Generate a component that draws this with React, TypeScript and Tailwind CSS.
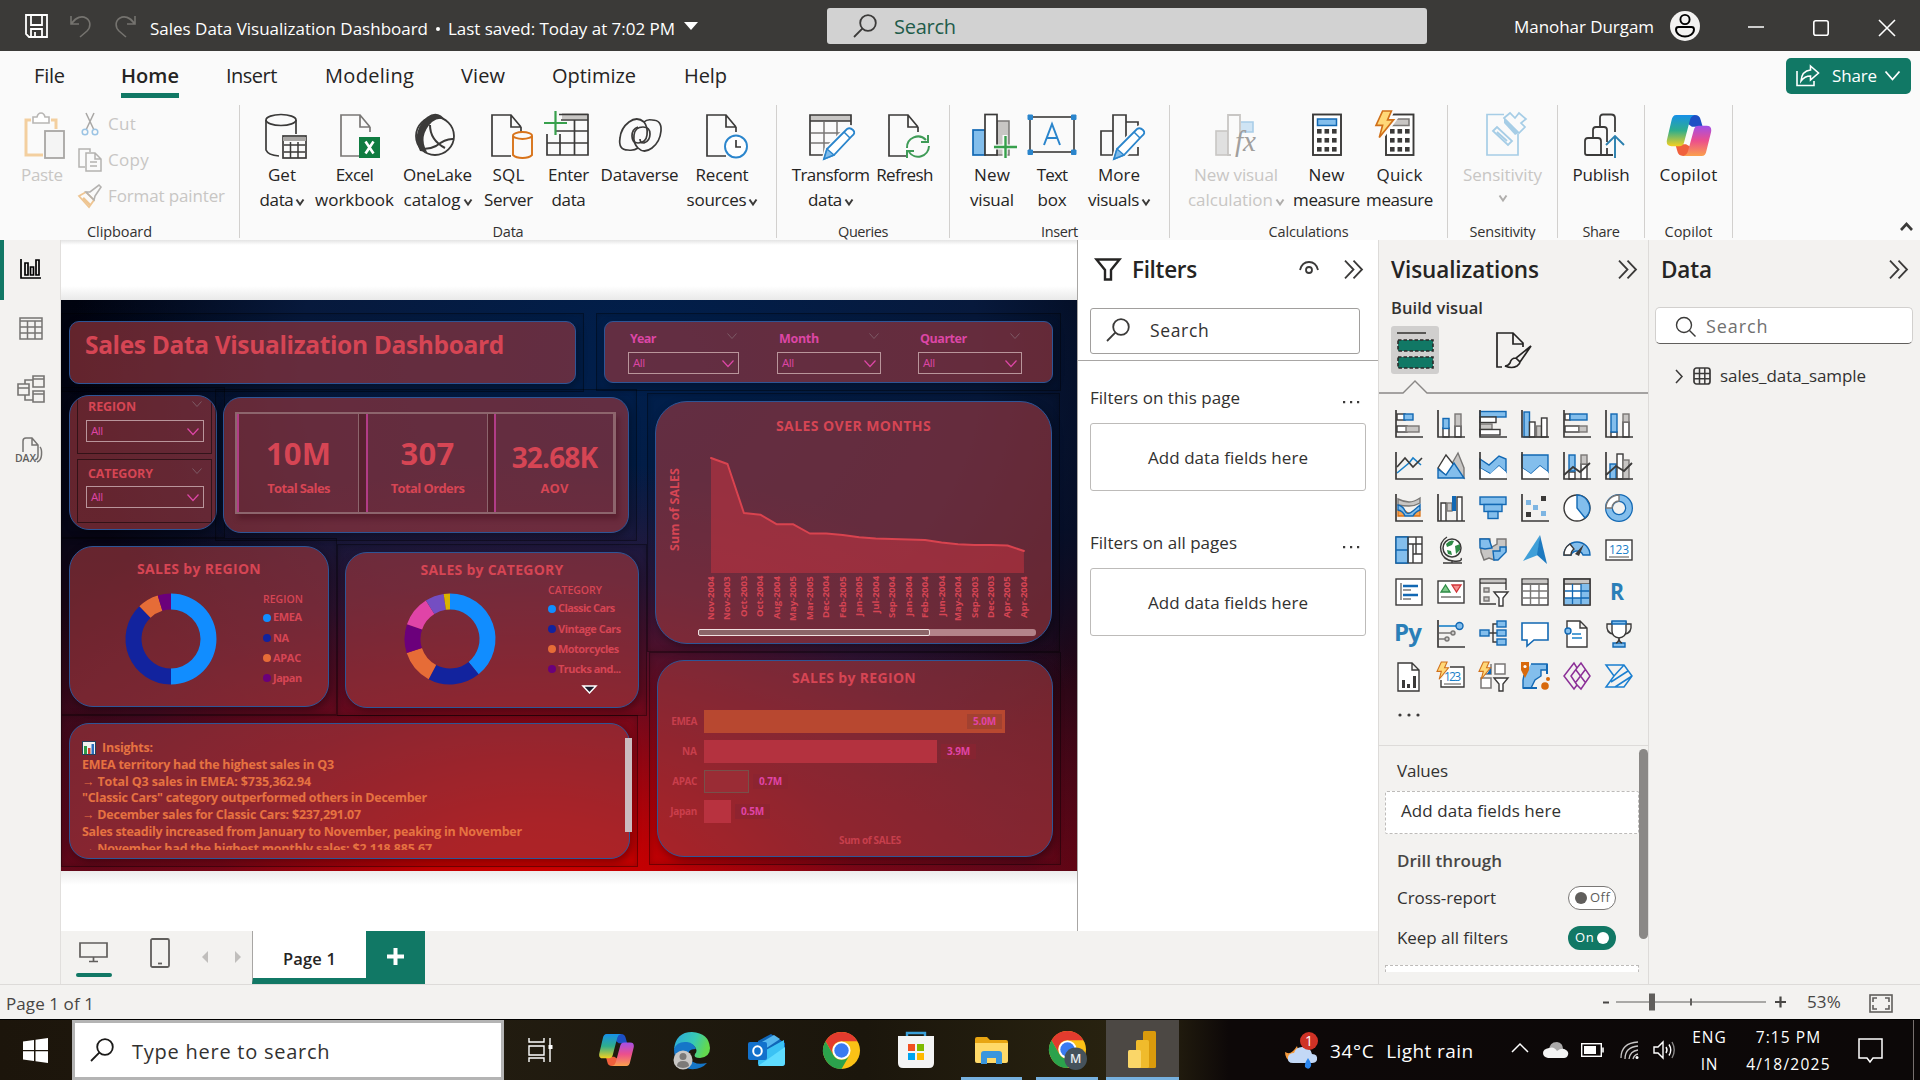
import React, { useLayoutEffect, useRef, type ReactNode } from "react";

const K = "#3b3a39";
const B = "#83beec";
const BS = "#1268b3";
const G = "#c8c6c4";
const GS = "#797775";

/* Text whose tracking is adjusted so that it fills the given width. */
function T({ w, c = "", children }: { w: number; c?: string; children: string }) {
  const ref = useRef<HTMLSpanElement>(null);
  useLayoutEffect(() => {
    const el = ref.current;
    if (!el) return;
    el.style.letterSpacing = "0px";
    const natural = el.getBoundingClientRect().width;
    el.style.letterSpacing = `${(w - natural) / Math.max(1, children.length - 0.5)}px`;
  }, [w, children]);
  return (
    <span ref={ref} className={`inline-block shrink-0 whitespace-nowrap ${c}`}>
      {children}
    </span>
  );
}

function Svg({ w, h, c = "", children }: { w: number; h: number; c?: string; children: ReactNode }) {
  return (
    <svg width={w} height={h} viewBox={`0 0 ${w} ${h}`} fill="none" className={`block shrink-0 overflow-visible ${c}`}>
      {children}
    </svg>
  );
}

const Chev = ({ w, h, s, sw = 1.5, c = "" }: { w: number; h: number; s: string; sw?: number; c?: string }) => (
  <Svg w={w} h={h} c={c}>
    <path d={`M0.5 0.5L${w / 2} ${h - 0.5}L${w - 0.5} 0.5`} stroke={s} strokeWidth={sw} />
  </Svg>
);

const Mag = ({ s, w = 24, c = "" }: { s: string; w?: number; c?: string }) => (
  <svg width={w} height={w} viewBox="0 0 24 24" fill="none" stroke={s} strokeWidth="1.8" className={`block shrink-0 ${c}`}>
    <circle cx="15" cy="9" r="7.8" />
    <path d="M9.3 14.7L1 23" />
  </svg>
);

const DoubleChev = () => (
  <Svg w={19} h={19} c="-mt-0.5">
    <path d="M1 0.7L9.5 9.5L1 18.3M9.5 0.7L18 9.5L9.5 18.3" stroke={K} strokeWidth="1.8" />
  </Svg>
);

/* ---------- title bar ---------- */
function TitleBar() {
  return (
    <header className="flex h-[51px] items-center bg-[#3b3a38] text-white">
      <Svg w={24} h={24} c="ml-[25px]">
        <path d="M1 1H22V23H4L1 20Z M6 1V11H17V1 M6 23V15H17V23 M10 18V23" stroke="#fff" strokeWidth="1.8" />
      </Svg>
      <Svg w={22} h={22} c="ml-[21px]">
        <path d="M1 1V9H9M1.5 8.5C6 2 12 .5 16 3C21 6 21 12 17 16L10 22" stroke="#75736f" strokeWidth="1.6" />
      </Svg>
      <Svg w={22} h={22} c="ml-[22px]">
        <path d="M21 1V9H13M20.500 8.500C16 2 10 .5 6 3C1 6 1 12 5 16L12 22" stroke="#75736f" strokeWidth="1.6" />
      </Svg>
      <div className="mt-[6px] ml-[14px] flex w-[526px] items-center text-[17px]">
        <T w={278}>Sales Data Visualization Dashboard</T>
        <span className="mx-[8px] h-1 w-1 rounded-full bg-white" />
        <T w={227}>Last saved: Today at 7:02 PM</T>
      </div>
      <Svg w={14} h={8} c="ml-[8px]"><path d="M0 0H14L7 8Z" fill="#fff" /></Svg>
      <div className="ml-[129px] flex h-9 w-[600px] items-center rounded-[3px] bg-[#d2d2d2] pl-[26px]">
        <Mag s={K} />
        <T w={62} c="mt-0.5 ml-[17px] text-[20px] text-[#1f5c4a]">Search</T>
      </div>
      <T w={140} c="mt-[2px] ml-[87px] text-[17px]">Manohar Durgam</T>
      <Svg w={30} h={30} c="ml-[16px]">
        <circle cx="15" cy="15" r="15" fill="#f3f2f1" />
        <circle cx="15" cy="8.500" r="4.600" stroke="#000" strokeWidth="1.9" />
        <path d="M8.500 16H21.500Q24 16 24 18.500C24 23 19 25.500 15 25.500S6 23 6 18.500Q6 16 8.500 16Z" stroke="#000" strokeWidth="1.9" />
      </Svg>
      <Svg w={16} h={16} c="mt-0.5 ml-[48px]"><path d="M0 8H16" stroke="#fff" strokeWidth="1.5" /></Svg>
      <Svg w={16} h={16} c="mt-[5px] ml-[49px]"><rect x=".8" y=".8" width="14.400" height="14.400" rx="2" stroke="#fff" strokeWidth="1.6" /></Svg>
      <Svg w={16} h={16} c="mt-[5px] ml-[50px]"><path d="M0 0L16 16M16 0L0 16" stroke="#fff" strokeWidth="1.6" /></Svg>
    </header>
  );
}

/* ---------- ribbon ---------- */
function Tabs() {
  const t = "flex h-full items-center text-[20px]";
  return (
    <nav className="flex h-[50px] items-center text-[#252423]">
      <div className={`${t} ml-[34px] w-[87px]`}><T w={31}>File</T></div>
      <div className={`${t} relative w-[105px] font-semibold`}>
        <T w={58}>Home</T>
        <span className="absolute bottom-[3px] left-0 h-[5px] w-[58px] bg-[#117865]" />
      </div>
      <div className={`${t} w-[99px]`}><T w={51}>Insert</T></div>
      <div className={`${t} w-[136px]`}><T w={89}>Modeling</T></div>
      <div className={`${t} w-[91px]`}><T w={44}>View</T></div>
      <div className={`${t} w-[132px]`}><T w={84}>Optimize</T></div>
      <div className={`${t}`}><T w={43}>Help</T></div>
      <div className="-mt-px mr-[9px] ml-auto flex h-9 w-[125px] items-center rounded-[5px] bg-[#117865] pl-[10px] text-white">
        <Svg w={24} h={22}>
          <path d="M1 6V20.500H18V16" stroke="#fff" strokeWidth="1.6" />
          <path d="M14.500 1L22.500 8L14.500 15V11C10 11 7.500 12.500 5 16C5.500 9.500 9 5.500 14.500 5Z" stroke="#fff" strokeWidth="1.6" />
        </Svg>
        <T w={45} c="ml-[12px] text-[17px]">Share</T>
        <Chev w={15} h={9} s="#fff" sw={1.8} c="ml-[8px]" />
      </div>
    </nav>
  );
}

function Group({ c, label, lw, children }: { c: string; label: string; lw: number; children: ReactNode }) {
  return (
    <section className={`flex h-[133px] shrink-0 flex-col border-r border-[#d2d0ce] ${c}`}>
      <div className="flex h-[112px] shrink-0 pt-[6px]">{children}</div>
      <div className="mt-[4px] flex w-full shrink-0 justify-center text-[14.500px] leading-[21px] text-[#323130]"><T w={lw}>{label}</T></div>
    </section>
  );
}

function Btn({ c, a, aw, b, bw, chev, dim, children }: { c: string; a: string; aw: number; b?: string; bw?: number; chev?: boolean; dim?: boolean; children: ReactNode }) {
  return (
    <div className={`flex shrink-0 flex-col items-center text-[17px] leading-[25px] ${dim ? "text-[#c8c6c4]" : "text-[#252423]"} ${c}`}>
      <div className="flex h-[51px] w-12 shrink-0 pt-px">{children}</div>
      <T w={aw}>{a}</T>
      <span className="flex items-center justify-center gap-[3px]">
        {b ? <T w={bw ?? 0}>{b}</T> : null}
        {chev ? <Chev w={8} h={6} s={dim ? "#b0aeac" : K} sw={2} c={b ? "mt-1" : "mt-2"} /> : null}
      </span>
    </div>
  );
}

const Doc = ({ x = 6, s = K }: { x?: number; s?: string }) => (
  <path transform={`translate(${x} 2)`} d="M30 13V18M30 13L20 1H1V42H20M20 1V13H30" stroke={s} strokeWidth="1.7" />
);
const Pencil = ({ x, y }: { x: number; y: number }) => (
  <g transform={`translate(${x} ${y})`}>
    <path d="M0 33L3 22L23 2Q27 -1 30 2T29 9L10 29Z" fill="#fafafa" stroke="#fafafa" strokeWidth="5" />
    <path d="M0 32L3 22L23 2Q26 0 29 3T28 9L10 28Z" fill="#fff" stroke="#2a85cc" strokeWidth="1.8" />
    <path d="M0 32L3 22L10 28Z" fill="#83beec" stroke="#2a85cc" strokeWidth="1.400" />
    <path d="M20 5L26 11" stroke="#2a85cc" strokeWidth="1.500" />
  </g>
);

const CopilotMark = ({ w, h, id, c = "" }: { w: number; h: number; id: string; c?: string }) => (
  <svg width={w} height={h} viewBox="0 0 46 42" className={`block shrink-0 ${c}`}>
    <defs>
      <linearGradient id={`${id}a`} x1="0" y1="0" x2="0" y2="1"><stop offset="0" stopColor="#1690e8" /><stop offset=".5" stopColor="#2fae8c" /><stop offset="1" stopColor="#f5d020" /></linearGradient>
      <linearGradient id={`${id}b`} x1="0" y1="0" x2="0" y2="1"><stop offset="0" stopColor="#a24fe8" /><stop offset=".5" stopColor="#ec4f8c" /><stop offset="1" stopColor="#fba04c" /></linearGradient>
    </defs>
    <path d="M24 0H29Q34 0 35 5L37 12H26L19 7Z" fill="#1c4fc4" />
    <path d="M22 42H17Q12 42 11 37L9 30H20L27 34Z" fill="#f0603c" />
    <path d="M10 0H29Q25 1 24 5L18 28Q17 32 13 32H5Q-1 32 .5 25L5 6Q6 0 10 0Z" fill={`url(#${id}a)`} />
    <path d="M36 42H17Q21 41 22 37L28 15Q29 11 33 11H41Q47 11 45.500 18L41 36Q40 42 36 42Z" fill={`url(#${id}b)`} />
  </svg>
);

const Bolt = () => <path d="M6 0H14L10.500 8H16L3 24L6 13H0Z" fill="#ffd878" stroke="#d0701a" strokeWidth="1.500" />;

function Ribbon() {
  const dots = [0, 1, 2].flatMap((r) => [0, 1, 2].map((q) => [q, r]));
  return (
    <div className="flex h-[139px] items-start bg-[#fafafa] pt-[4px]">
      <Group c="w-[240px]" label="Clipboard" lw={65}>
        <div className="ml-[21px] flex w-[57px] flex-col items-start text-[17px] leading-[25px] text-[#c8c6c4]">
          <div className="flex h-[51px] pt-px">
            <Svg w={48} h={48}>
              <path d="M10 8H5V43H22M30 8H35V17" stroke="#f3cf9f" strokeWidth="3" />
              <path d="M12 11V5H16Q17 1 20 1T24 5H28V11Z" stroke="#b8b6b4" strokeWidth="1.600" fill="#fff" />
              <rect x="24" y="19" width="19" height="27" stroke="#a8a6a4" strokeWidth="1.800" fill="#f4f4f4" />
            </Svg>
          </div>
          <T w={42}>Paste</T>
        </div>
        <div className="-mt-px flex flex-col text-[17px] text-[#c8c6c4]">
          <div className="flex h-[28px] items-center">
            <Svg w={24} h={24} c="mr-[6px]">
              <path d="M8 1L16 18M16 1L8 18" stroke="#a8a6a4" strokeWidth="1.500" />
              <circle cx="7" cy="20" r="2.800" stroke="#9cc4e4" strokeWidth="1.500" /><circle cx="17" cy="20" r="2.800" stroke="#9cc4e4" strokeWidth="1.500" />
            </Svg>
            <T w={28}>Cut</T>
          </div>
          <div className="mt-[8px] flex h-[28px] items-center">
            <Svg w={24} h={24} c="mr-[6px]">
              <path d="M7 19H1V1H12V4M8 5H17L23 11V23H8ZM17 5V11H23M12 14H19M12 18H19" stroke="#b4b2b0" strokeWidth="1.500" />
            </Svg>
            <T w={41}>Copy</T>
          </div>
          <div className="mt-[8px] flex h-[28px] items-center">
            <Svg w={24} h={24} c="mr-[6px]">
              <path d="M1 12L8 8L16 16L11 23Z" stroke="#eec592" strokeWidth="1.800" /><path d="M8 8L12 8L21 1L23 3L17 12L16 16Z" stroke="#b4b2b0" strokeWidth="1.600" /><path d="M5 14L12 21" stroke="#eec592" strokeWidth="2.500" />
            </Svg>
            <T w={117}>Format painter</T>
          </div>
        </div>
      </Group>
      <Group c="w-[537px]" label="Data" lw={31}>
        <Btn c="ml-[15px] w-[54px]" a="Get" aw={28} b="data" bw={34} chev>
          <Svg w={48} h={48}>
            <path d="M8 8V38Q10 43 21 44M38 8V22" stroke={K} strokeWidth="1.700" /><ellipse cx="23" cy="8" rx="15" ry="5.500" stroke={K} strokeWidth="1.700" />
            <rect x="25" y="24" width="23" height="22" fill="#fafafa" stroke={K} strokeWidth="1.700" /><path d="M25 27H48" stroke="#a8a6a4" strokeWidth="4" /><path d="M26 33H47M26 40H47M32.500 30V46M40 30V46" stroke={K} strokeWidth="1.500" />
          </Svg>
        </Btn>
        <Btn c="w-[91px]" a="Excel" aw={38} b="workbook" bw={79}>
          <Svg w={48} h={48}><Doc x={9} s={GS} /><rect x="28" y="25" width="21" height="21" fill="#107c41" /><path d="M34.500 29.500L42.500 41.500M42.500 29.500L34.500 41.500" stroke="#fff" strokeWidth="2.600" /></Svg>
        </Btn>
        <Btn c="w-[75px]" a="OneLake" aw={69} b="catalog" bw={57} chev>
          <Svg w={48} h={48} c="-ml-1">
            <circle cx="25" cy="24" r="19" stroke={K} strokeWidth="1.800" />
            <path d="M14 8Q2 22 10 39L17 40Q8 24 22 10Q30 4 36 9Q28 -3 17 5Z" fill={K} /><path d="M20 13Q20 28 35 36M10 36Q18 38 26 34Q36 26 44 27" stroke={K} strokeWidth="2" />
          </Svg>
        </Btn>
        <Btn c="w-[67px]" a="SQL" aw={32} b="Server" bw={49}>
          <Svg w={48} h={48}><Doc x={6} /><path d="M28 24V43Q31 46 37.500 46T47 43V24" fill="#fafafa" stroke="#d8731a" strokeWidth="1.900" /><ellipse cx="37.500" cy="23.500" rx="9.500" ry="3.500" fill="#fafafa" stroke="#d8731a" strokeWidth="1.900" /></Svg>
        </Btn>
        <Btn c="w-[53px]" a="Enter" aw={41} b="data" bw={34}>
          <Svg w={48} h={48} c="-ml-px">
            <path d="M18 4H44" stroke={G} strokeWidth="6" /><path d="M15 2.500H44V43H3V22M17 8H44M3 31H44M11 19H44M16 22V43M30.500 8V43" stroke={K} strokeWidth="1.700" /><path d="M0 11H23M11.500 -1V23" stroke="#37a04c" strokeWidth="2.200" />
          </Svg>
        </Btn>
        <Btn c="w-[89px]" a="Dataverse" aw={78}>
          <Svg w={48} h={48}>
            <path d="M36 8Q46 8 45 19Q44 30 36 36T22 36Q17 31 18 23T27 15Q34 15 34 22T28 31Q24 31 24 27" stroke={K} strokeWidth="1.700" />
            <path d="M12 38Q2 38 4 26Q5 16 13 10T28 10Q32 15 31 23T22 31Q16 31 16 24T22 15" stroke={K} strokeWidth="1.700" />
            <path d="M36 8Q31 7 28 10M12 38Q18 39 22 36" stroke={K} strokeWidth="1.700" />
          </Svg>
        </Btn>
        <Btn c="w-[76px]" a="Recent" aw={53} b="sources" bw={60} chev>
          <Svg w={48} h={48}><Doc x={8} /><circle cx="38" cy="34.500" r="11" fill="#fff" stroke="#2a85cc" strokeWidth="1.900" /><path d="M38 28V35H43" stroke={K} strokeWidth="1.700" /></Svg>
        </Btn>
      </Group>
      <Group c="w-[173px]" label="Queries" lw={50}>
        <Btn c="ml-[10px] w-[87px]" a="Transform" aw={78} b="data" bw={34} chev>
          <Svg w={48} h={48}><path d="M4 6H44" stroke={G} strokeWidth="6" /><path d="M3 3H44V9H3ZM44 9V18M3 9V43H18" stroke={K} strokeWidth="1.700" /><path d="M4 21H36M4 31H26M17 10V42M30 10V26" stroke={GS} strokeWidth="1.500" /><Pencil x={17} y={15} /></Svg>
        </Btn>
        <Btn c="w-[61px]" a="Refresh" aw={57}>
          <Svg w={48} h={48}><Doc x={7} /><path d="M26 36A11 11 0 0 1 45 28M48 34A11 11 0 0 1 28 40" stroke="#3f9b57" strokeWidth="2" /><path d="M47 23V30H40M26 46V39H33" stroke="#3f9b57" strokeWidth="2" /></Svg>
        </Btn>
      </Group>
      <Group c="w-[220px]" label="Insert" lw={37}>
        <Btn c="ml-[12px] w-[60px]" a="New" aw={36} b="visual" bw={44}>
          <Svg w={48} h={48}><rect x="5" y="18" width="12" height="25" fill={B} stroke={BS} strokeWidth="1.700" /><rect x="29" y="9" width="12" height="34" fill={G} stroke={GS} strokeWidth="1.500" /><rect x="17" y="2.500" width="12" height="40.500" fill="#fff" stroke={K} strokeWidth="1.700" /><path d="M25 35H49M37 23V47" stroke="#fafafa" strokeWidth="5" /><path d="M26 35H49M37.500 24V46" stroke="#37a04c" strokeWidth="2.400" /></Svg>
        </Btn>
        <Btn c="w-[60px]" a="Text" aw={31} b="box" bw={29}>
          <Svg w={48} h={48}><rect x="2" y="5" width="44" height="35" stroke={K} strokeWidth="1.600" /><path d="M0 3H4.500V7.500H0ZM43.500 3H48V7.500H43.500ZM0 38H4.500V42.500H0ZM43.500 38H48V42.500H43.500Z" fill="#2a85cc" stroke="#2a85cc" /><path d="M16 33L24 12L32 33M18.500 26H29.500" stroke="#2a85cc" strokeWidth="2" /></Svg>
        </Btn>
        <Btn c="w-[74px]" a="More" aw={42} b="visuals" bw={51} chev>
          <Svg w={48} h={48}><path d="M18 43H6V19H18M31 10H43V20M43 35V43H32M18 43V3H31V28" stroke={K} strokeWidth="1.700" /><Pencil x={19} y={15} /></Svg>
        </Btn>
      </Group>
      <Group c="w-[278px]" label="Calculations" lw={80}>
        <Btn c="ml-[13px] w-[106px]" a="New visual" aw={84} b="calculation" bw={85} chev dim>
          <Svg w={48} h={48}><rect x="4" y="19" width="12" height="24" fill="#e0e0e0" stroke={G} strokeWidth="1.600" /><path d="M29 10H41V20H29" fill="#cfe4f4" stroke="#a9cde8" strokeWidth="1.600" /><path d="M19 43H16V3H28V25" fill="#fafafa" stroke={G} strokeWidth="1.800" />
          <text x="23" y="39" fontFamily="Liberation Serif" fontStyle="italic" fontSize="29" fill="#a19f9d">fx</text></Svg>
        </Btn>
        <Btn c="w-[75px]" a="New" aw={36} b="measure" bw={67}>
          <Svg w={48} h={48}><rect x="10" y="2.500" width="28" height="40.500" fill="#fff" stroke={K} strokeWidth="1.900" /><rect x="14.500" y="7" width="19" height="6.500" fill={B} stroke={BS} strokeWidth="1.500" />{dots.map(([q, r]) => <rect key={`${q}${r}`} x={14 + q * 7.5} y={17 + r * 9} width="4.600" height="4.600" fill={K} />)}</Svg>
        </Btn>
        <Btn c="w-[71px]" a="Quick" aw={46} b="measure" bw={67}>
          <Svg w={48} h={48}><rect x="10" y="2.500" width="27.500" height="40.500" fill="#fff" stroke={K} strokeWidth="1.900" /><rect x="14" y="7" width="19" height="6.500" fill={G} stroke={GS} strokeWidth="1.500" />{dots.map(([q, r]) => <rect key={`${q}${r}`} x={14 + q * 7.5} y={17 + r * 9} width="4.600" height="4.600" fill={K} />)}<g transform="translate(0 -1) scale(1.100)"><path d="M6 0H14L10.500 8H16L3 26L6 13H0Z" stroke="#fafafa" strokeWidth="5" /><Bolt /></g></Svg>
        </Btn>
      </Group>
      <Group c="w-[110px]" label="Sensitivity" lw={66}>
        <Btn c="w-[109px]" a="Sensitivity" aw={79} chev dim>
          <Svg w={48} h={48}><path d="M25 2.500H8V43H39V22" stroke="#a6cde6" strokeWidth="1.700" /><path d="M14 19L18 15L33 29L29 33ZM18 20L28 29" stroke="#a6cde6" strokeWidth="1.800" /><path d="M25 6L31 1L36 6L40 1L47 7L42 11L46 15L40 21Z" stroke="#a6cde6" strokeWidth="1.700" /><path d="M25 6L40 21L36 23L25 11Z" fill="#a6cde6" /></Svg>
        </Btn>
      </Group>
      <Group c="w-[87px]" label="Share" lw={37}>
        <Btn c="w-[86px]" a="Publish" aw={57}>
          <Svg w={48} h={48}><path d="M36 43H10Q8 43 8 41V29Q8 26 11 26H21Q24 26 24 29V43M16 26V18Q16 15 19 15H27Q30 15 30 18V30M23 15V6Q23 2.500 26 2.500H34Q38 2.500 38 6V20M30 36V43" stroke={K} strokeWidth="1.800" /><path d="M38 46V24M29 33L38 24L47 33" stroke="#2a7fae" strokeWidth="1.900" /></Svg>
        </Btn>
      </Group>
      <Group c="w-[88px]" label="Copilot" lw={48}>
        <Btn c="w-[87px]" a="Copilot" aw={58}><CopilotMark id="rb" w={46} h={41} c="mt-[3px] ml-px" /></Btn>
      </Group>
      <Svg w={13} h={9} c="mt-[117px] ml-auto mr-[7px]"><path d="M1 8L6.500 2L12 8" stroke={K} strokeWidth="2.600" /></Svg>
    </div>
  );
}

/* ---------- report canvas ---------- */
function Visual({ c, card, children }: { c: string; card: string; children: ReactNode }) {
  return (
    <div className={`absolute border border-black/40 p-[7px] shadow-[inset_0_0_6px_rgba(0,0,0,0.2)] ${c}`}>
      <div className={`h-full w-full overflow-hidden border border-[#2e5596] bg-[rgba(157,56,61,0.63)] shadow-[2px_3px_8px_rgba(0,0,0,0.35)] ${card}`}>{children}</div>
    </div>
  );
}

function Slicer({ label, lw, c, box, pink }: { label: string; lw: number; c: string; box: string; pink?: boolean }) {
  return (
    <div className={c}>
      <div className={`flex h-[18px] items-center justify-between pl-[2px] pr-[2px] text-[12.500px] font-bold ${pink ? "text-[#dc46a5]" : "text-[#d64554]"}`}>
        <T w={lw}>{label}</T>
        <Chev w={10} h={6} s="#7d5a66" sw={1} c="-mt-1.5" />
      </div>
      <div className={`flex items-center justify-between border border-[#b9959b] pr-[4px] pl-[4px] text-[11.500px] text-[#dc46a5] ${box}`}>
        <T w={12}>All</T>
        <Chev w={12} h={7} s="#dc46a5" sw={1.2} />
      </div>
    </div>
  );
}

function arc(cx: number, cy: number, R: number, r: number, a: number, b: number) {
  const p = (rad: number, deg: number) => {
    const t = ((deg - 90) * Math.PI) / 180;
    return `${(cx + rad * Math.cos(t)).toFixed(2)} ${(cy + rad * Math.sin(t)).toFixed(2)}`;
  };
  const large = b - a > 180 ? 1 : 0;
  return `M${p(R, a)}A${R} ${R} 0 ${large} 1 ${p(R, b)}L${p(r, b)}A${r} ${r} 0 ${large} 0 ${p(r, a)}Z`;
}

function Donut({ parts, c }: { parts: [string, number, number][]; c: string }) {
  return (
    <Svg w={92} h={92} c={c}>
      {parts.map(([f, a, b]) => <path key={f} d={arc(46, 46, 45.5, 29.5, a, b)} fill={f} />)}
    </Svg>
  );
}

function Legend({ title, tw, items }: { title: string; tw: number; items: [string, string, number][] }) {
  return (
    <div className="flex flex-col text-[11px] font-bold">
      <div className="flex h-[16px] items-center text-[10.500px] font-semibold"><T w={tw}>{title}</T></div>
      {items.map(([t, f, w]) => (
        <div key={t} className="flex h-[20.200px] items-center gap-[2px]">
          <Svg w={8} h={8} c="-mt-px"><circle cx="4" cy="4" r="4" fill={f} /></Svg>
          <T w={w} c="-mt-px">{t}</T>
        </div>
      ))}
    </div>
  );
}

const months = ["Nov-2004", "Nov-2003", "Oct-2003", "Oct-2004", "Aug-2004", "May-2005", "Mar-2005", "Dec-2004", "Feb-2005", "Jan-2005", "Jul-2004", "Sep-2004", "Jan-2004", "Feb-2004", "Jun-2004", "May-2004", "Sep-2003", "Dec-2003", "Apr-2005", "Apr-2004"];
const ys = [1, 7, 56, 57.7, 67.3, 67.3, 76.5, 76.6, 78, 80.3, 81.5, 82, 82.4, 83, 85.6, 87.3, 88, 88, 88.5, 94];
const line = ys.map((y, i) => `${(i * 16.47).toFixed(1)} ${y}`).join("L");

const bars: { t: string; w: number; v: string; cls: string; inside?: boolean }[] = [
  { t: "EMEA", w: 26, v: "5.0M", cls: "w-[301px] bg-[#b84830]", inside: true },
  { t: "NA", w: 15, v: "3.9M", cls: "w-[233px] bg-[#b4323f]" },
  { t: "APAC", w: 25, v: "0.7M", cls: "w-[45px] border border-[#78504a] bg-[#9a2c35]" },
  { t: "Japan", w: 27, v: "0.5M", cls: "w-[27px] bg-[#b8323f]" },
];

const kpis: [string, number, string, number, string][] = [
  ["10M", 65, "Total Sales", 63, "w-[129px]"],
  ["307", 54, "Total Orders", 74, "w-[128px]"],
  ["32.68K", 86, "AOV", 28, "w-[121px]"],
];

const insights: [string, number][] = [
  ["EMEA territory had the highest sales in Q3", 252],
  ["→ Total Q3 sales in EMEA: $735,362.94", 229],
  ['"Classic Cars" category outperformed others in December', 345],
  ["→ December sales for Classic Cars: $237,291.07", 279],
  ["Sales steadily increased from January to November, peaking in November", 440],
  ["→ November had the highest monthly sales: $2,118,885.67", 350],
];

function Report() {
  return (
    <div className="relative h-[571px] w-full overflow-hidden bg-[radial-gradient(ellipse_64%_80%_at_47%_108%,rgba(215,0,0,1)_0%,rgba(198,0,2,0.96)_20%,rgba(126,8,26,0.82)_50%,rgba(90,18,50,0.42)_75%,rgba(60,24,60,0)_100%),radial-gradient(ellipse_56%_85%_at_57%_12%,#001f4c_0%,#07193c_60%,rgba(4,6,22,0)_100%),linear-gradient(180deg,#00030f_0%,#060616_40%,#2c0614_70%,#640008_100%)] text-[#d64554]">
      <Visual c="top-[13px] left-0 h-[79px] w-[523px]" card="rounded-[10px] pt-[6px] pl-[15px]">
        <T w={419} c="text-[24.500px] leading-[34px] font-bold">Sales Data Visualization Dashboard</T>
      </Visual>
      <Visual c="top-[13px] left-[535px] h-[78px] w-[465px]" card="rounded-[9px] pt-[8px]">
        <div className="flex">
          <Slicer pink label="Year" lw={26} c="ml-[23px] w-[111px]" box="mt-[4px] h-[22px]" />
          <Slicer pink label="Month" lw={40} c="ml-[38px] w-[104px]" box="mt-[4px] h-[22px]" />
          <Slicer pink label="Quarter" lw={47} c="ml-[37px] w-[104px]" box="mt-[4px] h-[22px]" />
        </div>
      </Visual>
      <Visual c="top-[87px] left-0 h-[151px] w-[164px]" card="rounded-[20px]">
        <div className="ml-[7px] h-[58px] w-[135px] border-x border-b border-black/50 pt-[2px] pl-[8px]">
          <Slicer label="REGION" lw={48} c="w-[118px]" box="mt-[4px] h-[22px]" />
        </div>
        <div className="mt-[5px] ml-[7px] h-[64px] w-[135px] border border-black/50 pt-[5px] pl-[8px]">
          <Slicer label="CATEGORY" lw={65} c="w-[118px]" box="mt-[3px] h-[22px]" />
        </div>
      </Visual>
      <Visual c="top-[89px] left-[154px] h-[152px] w-[422px]" card="rounded-[18px] pt-[14px] pl-[11px]">
        <div className="flex h-[102px] w-[381px] border-2 border-[#8d656d] shadow-[3px_5px_5px_rgba(60,10,20,0.35)]">
          {kpis.map(([v, vw, t, tw, c], i) => (
            <div key={t} className={`flex shrink-0 ${c}`}>
              <div className={`flex h-full flex-col items-center border-r-[1.500px] border-l-2 border-r-[#8d656d] border-l-[#b23c87] font-bold ${i === 2 ? "w-[120px]" : "w-[122px]"}`}>
                <T w={vw} c={i === 2 ? "mt-[23px] text-[28px] leading-[40px]" : "mt-[19px] text-[31px] leading-[40px]"}>{v}</T>
                <T w={tw} c={i === 2 ? "mt-px text-[13px] leading-[20px]" : "mt-[5px] text-[13px] leading-[20px]"}>{t}</T>
              </div>
              {i < 2 ? <div className="h-full flex-1 bg-[#501c28]/70" /> : null}
            </div>
          ))}
        </div>
      </Visual>
      <Visual c="top-[93px] left-[586px] h-[259px] w-[413px]" card="rounded-[32px]">
        <div className="flex h-[46px] justify-center pt-[13px]"><T w={155} c="text-[14px] leading-[22px] font-bold">SALES OVER MONTHS</T></div>
        <div className="flex">
          <div className="flex h-[123px] w-[55px] shrink-0 items-center pl-[10px]">
            <span className="rotate-180 text-[12.500px] leading-[18px] font-bold [writing-mode:vertical-rl]">Sum of SALES</span>
          </div>
          <Svg w={313} h={116} c="mt-[9px]">
            <path d={`M${line}L313 116L0 116Z`} fill="rgba(200,52,66,0.52)" />
            <path d={`M${line}`} stroke="#d9434f" strokeWidth="2" strokeLinejoin="round" strokeLinecap="round" />
          </Svg>
        </div>
        <div className="mt-[3px] ml-[47px] flex">
          {months.map((m) => (
            <span key={m} className="flex h-[52px] w-[16.470px] shrink-0 rotate-180 items-center justify-end text-[9.500px] leading-[12px] font-bold [writing-mode:vertical-rl]"><span className="flex h-[50px] w-full items-center justify-end">{m}</span></span>
          ))}
        </div>
        <div className="mt-px ml-[42px] h-[7px] w-[338px] rounded-[3px] bg-[#b4838a]">
          <div className="h-full w-[232px] rounded-[2px] border border-[#f0dfe0] bg-[#8b6468]" />
        </div>
      </Visual>
      <Visual c="top-[238px] left-0 h-[177px] w-[276px]" card="rounded-[24px] pt-[11px]">
        <div className="flex justify-center"><T w={124} c="text-[14px] leading-[22px] font-bold">SALES by REGION</T></div>
        <div className="flex">
          <Donut c="mt-[13px] ml-[55px]" parts={[["#118dff", 0, 180], ["#12239e", 180, 316], ["#e66c37", 316, 343], ["#6b007b", 343, 360]]} />
          <div className="mt-[12px] ml-[46px]">
            <Legend title="REGION" tw={40} items={[["EMEA", "#118dff", 29], ["NA", "#12239e", 16], ["APAC", "#e66c37", 28], ["Japan", "#6b007b", 29]]} />
          </div>
        </div>
      </Visual>
      <Visual c="top-[244px] left-[276px] h-[172px] w-[310px]" card="rounded-[22px] pt-[6px]">
        <div className="flex justify-center"><T w={143} c="text-[14px] leading-[22px] font-bold">SALES by CATEGORY</T></div>
        <div className="flex">
          <Donut c="mt-[12px] ml-[58px]" parts={[["#118dff", 0, 141], ["#12239e", 141, 208], ["#e66c37", 208, 252], ["#6b007b", 252, 289], ["#e044a7", 289, 328], ["#744ec2", 328, 352], ["#d9b300", 352, 360]]} />
          <div className="mt-[2px] ml-[52px]">
            <Legend title="CATEGORY" tw={54} items={[["Classic Cars", "#118dff", 57], ["Vintage Cars", "#12239e", 63], ["Motorcycles", "#e66c37", 61], ["Trucks and...", "#6b007b", 63]]} />
            <Svg w={15} h={9} c="mt-[5px] ml-[34px]"><path d="M1 1H14L7.500 8Z" stroke="#fff" strokeWidth="1.500" fill="#1c1c2c" /></Svg>
          </div>
        </div>
      </Visual>
      <Visual c="top-[415px] left-0 h-[152px] w-[577px]" card="rounded-[20px] pt-[16px] pl-[12px]">
        <div className="flex h-[110px] flex-col overflow-hidden text-[12.500px] leading-[16.800px] font-bold text-[#e67241]">
          <div className="flex items-center">
            <Svg w={14} h={14} c="mr-[6px]"><rect width="14" height="14" fill="#26405c" /><rect x="1" y="1" width="12" height="12" fill="#f2f2f2" /><path d="M2 5H5V13H2Z" fill="#2e9e48" /><path d="M6 7H8.500V13H6Z" fill="#d04030" /><path d="M9.500 3H12V13H9.500Z" fill="#2a6fc0" /></Svg>
            <T w={51}>Insights:</T>
          </div>
          {insights.map(([t, w]) => <div key={t}><T w={w}>{t}</T></div>)}
        </div>
      </Visual>
      <div className="absolute top-[438px] left-[564px] h-[94px] w-[7px] bg-[#cbbcc0]" />
      <Visual c="top-[352px] left-[588px] h-[213px] w-[412px]" card="rounded-[27px] pt-[6px]">
        <div className="flex justify-center pr-[2px]"><T w={124} c="text-[14px] leading-[22px] font-bold">SALES by REGION</T></div>
        <div className="mt-[21px] flex flex-col gap-[7px] text-[10px] font-bold">
          {bars.map((b) => (
            <div key={b.t} className="flex h-[23px] items-center">
              <div className="mr-[7px] flex w-[39px] justify-end opacity-80"><T w={b.w}>{b.t}</T></div>
              <div className={`flex h-full shrink-0 items-center justify-end pr-[3px] ${b.cls}`}>
                {b.inside ? <span className="flex bg-[#8c3a30]/50 px-[6px] leading-[15px] text-[#e044a7]"><T w={23}>{b.v}</T></span> : null}
              </div>
              {b.inside ? null : <span className="ml-[4px] flex bg-[#8a2430]/70 px-[6px] leading-[15px] text-[#e044a7]"><T w={23}>{b.v}</T></span>}
            </div>
          ))}
        </div>
        <div className="mt-[9px] ml-[181px] flex text-[10px] leading-[16px] font-bold opacity-80"><T w={62}>Sum of SALES</T></div>
      </Visual>
    </div>
  );
}

/* ---------- left rail ---------- */
function Rail() {
  return (
    <aside className="flex w-[61px] shrink-0 flex-col border-r border-[#e1dfdd] bg-[#f3f2f0]">
      <div className="flex h-[60px] items-center border-l-4 border-[#117865] pl-[16px]">
        <Svg w={22} h={22} c="-mt-0.5"><path d="M1 1V20H21M5 17V5H8V17ZM10.500 17V9H13.500V17ZM16 17V2H19V17Z" stroke="#000" strokeWidth="1.700" /></Svg>
      </div>
      <Svg w={24} h={23} c="mt-[17px] ml-[19px]"><path d="M1 1H23V22H1ZM1 4H23M1 10H23M1 16H23M8.500 4V22M16 4V22" stroke="#767472" strokeWidth="1.500" /></Svg>
      <Svg w={28} h={28} c="mt-[35px] ml-[17px]"><path d="M16 1H27V12H16ZM16 4H27M16 16H27V27H16ZM16 19H27M1 9H12V20H1ZM1 13H12M16 5H8V9M8 20V25H16" stroke="#767472" strokeWidth="1.600" /></Svg>
      <Svg w={27} h={27} c="mt-[34px] ml-[16px]">
        <path d="M7 15V4Q7 1 10 1H16L22 8V19Q22 22 19 23M16 1V8H22M24 10Q26 12 25.500 18Q25 24 21 25" stroke="#767472" strokeWidth="1.500" />
        <text x="-1" y="25" fontFamily="Open Sans" fontWeight="600" fontSize="10.500" fill="#605e5c" textLength="21">DAX</text>
      </Svg>
    </aside>
  );
}

function PageBar() {
  return (
    <div className="flex h-[53px] shrink-0 bg-[#f3f2f0]">
      <div className="ml-[15px] flex w-9 flex-col">
        <Svg w={29} h={21} c="mt-[11px] ml-[3px]"><path d="M1 1H28V15H1ZM14.500 15V19M10 19.500H19" stroke="#605e5c" strokeWidth="1.700" /></Svg>
        <span className="mt-[10px] h-1 w-9 rounded bg-[#117865]" />
      </div>
      <Svg w={20} h={31} c="mt-[7px] ml-[38px]"><rect x="1" y="1" width="18" height="28" rx="1.500" stroke="#605e5c" strokeWidth="1.800" /><path d="M8 25.500H12" stroke="#605e5c" strokeWidth="1.800" /></Svg>
      <Svg w={6} h={12} c="mt-[20px] ml-[32px]"><path d="M6 0V12L0 6Z" fill="#c0bebc" /></Svg>
      <Svg w={6} h={12} c="mt-[20px] ml-[27px]"><path d="M0 0V12L6 6Z" fill="#c0bebc" /></Svg>
      <div className="ml-[11px] flex h-full w-[114px] items-center justify-center border-b-[6px] border-l border-b-[#117865] border-l-[#a8a6a4] bg-white pt-[10px] text-[16.500px] font-semibold text-[#252423]"><T w={53}>Page 1</T></div>
      <div className="flex h-full w-[59px] items-center justify-center bg-[#117865] pb-[3px]"><Svg w={17} h={17}><path d="M0 8.500H17M8.500 0V17" stroke="#fff" strokeWidth="4" /></Svg></div>
    </div>
  );
}

/* ---------- filters pane ---------- */
function FilterSection({ t, w, c }: { t: string; w: number; c: string }) {
  return (
    <div className={`pr-[12px] pl-[12px] ${c}`}>
      <div className="flex h-[26px] items-center">
        <T w={w} c="text-[17px]">{t}</T>
        <Svg w={17} h={3} c="mt-2 mr-[6px] ml-auto"><path d="M0 0H2.200V2.200H0ZM7 0H9.200V2.200H7ZM14 0H16.200V2.200H14Z" fill={K} /></Svg>
      </div>
      <div className="mt-[12px] flex h-[68px] items-center justify-center rounded-[3px] border border-[#bdbbb9] pt-px"><T w={160} c="text-[17px]">Add data fields here</T></div>
    </div>
  );
}

function Filters() {
  return (
    <div className="w-[301px] shrink-0 border-l border-[#a8a6a4] bg-white text-[#323130]">
      <div className="flex h-[60px] items-center pl-[17px] text-[#252423]">
        <Svg w={26} h={23} c="-mt-0.5"><path d="M1.500 1.500H24.500L16 12V21.500H10V12Z" stroke="#252423" strokeWidth="2.400" /></Svg>
        <T w={65} c="ml-[11px] text-[22.500px] font-semibold">Filters</T>
        <Svg w={20} h={14} c="-mt-1 ml-[102px]"><path d="M1 9Q3 1 10 1T19 9" stroke={K} strokeWidth="1.800" /><circle cx="10" cy="9" r="3" stroke={K} strokeWidth="1.800" /></Svg>
        <div className="ml-[25px]"><DoubleChev /></div>
      </div>
      <div className="h-[61px] border-b border-[#a8a6a4] pt-[8px] pl-[12px]">
        <div className="flex h-[46px] w-[270px] items-center rounded-[3px] border border-[#a19f9d] pb-[2px] pl-[15px]">
          <Mag s={K} /><T w={59} c="ml-[20px] text-[17.500px]">Search</T>
        </div>
      </div>
      <FilterSection t="Filters on this page" w={150} c="mt-[24px]" />
      <FilterSection t="Filters on all pages" w={147} c="mt-[39px]" />
    </div>
  );
}

/* ---------- visualizations pane ---------- */
const Ax = () => <path d="M1 0V27H28" stroke={K} strokeWidth="1.700" />;
const gk = { stroke: K, strokeWidth: 1.4 };
const gb = { fill: B, stroke: BS, strokeWidth: 1.4 };
const gg = { fill: G, stroke: GS, strokeWidth: 1.4 };
const gw = { fill: "#fff", stroke: K, strokeWidth: 1.4 };

const visuals: ReactNode[] = [
  <><rect x="2" y="4" width="8" height="6" {...gw} /><rect x="9" y="4" width="9" height="6" {...gb} /><rect x="2" y="16" width="10" height="6" {...gw} /><rect x="11" y="16" width="13" height="6" {...gg} /><Ax /></>,
  <><rect x="6" y="18" width="6" height="9" {...gw} /><rect x="6" y="8.500" width="6" height="10" {...gb} /><rect x="18" y="16" width="6" height="11" {...gw} /><rect x="18" y="4" width="6" height="12" {...gg} /><Ax /></>,
  <><rect x="1" y="1.500" width="26" height="5.500" {...gb} /><rect x="1" y="7" width="16" height="5.500" {...gw} /><rect x="1" y="14" width="12" height="5.500" {...gg} /><rect x="1" y="19.500" width="20" height="5.500" {...gw} /><Ax /></>,
  <><rect x="3" y="2" width="5.500" height="25" {...gb} /><rect x="8.500" y="12" width="5.500" height="15" {...gw} /><rect x="15.500" y="16" width="5" height="11" {...gg} /><rect x="20.500" y="8" width="5.500" height="19" {...gw} /><Ax /></>,
  <><rect x="2" y="4" width="5" height="6" {...gw} /><rect x="7" y="4" width="17" height="6" {...gb} /><rect x="2" y="16" width="14" height="6" {...gw} /><rect x="16" y="16" width="8" height="6" {...gg} /><Ax /></>,
  <><rect x="6" y="22" width="6" height="5" {...gw} /><rect x="6" y="4" width="6" height="18" {...gb} /><rect x="18" y="12" width="6" height="15" {...gw} /><rect x="18" y="4" width="6" height="8" {...gg} /><Ax /></>,
  <><path d="M2 21L14 11L18 6L26 13" stroke="#1a80c8" strokeWidth="1.600" /><path d="M2 15L10 6L18 15L27 6" stroke={K} strokeWidth="1.700" /><Ax /></>,
  <><path d="M13 15L21 1L27 16V26Z" {...gg} /><path d="M1 16L9 3L17 13L10 25Z" {...gw} /><path d="M1 17L9 23L17 11L27 26H1Z" {...gb} /></>,
  <><path d="M1 7L10 13L20 4L27 7V20L20 14L12 22L1 16Z" {...gb} /><path d="M1 16L11 22L20 14L27 20V27H1Z" fill="#fff" /><Ax /></>,
  <><path d="M1 3H27V20L19 14L10 22L1 16Z" {...gb} /><path d="M1 16L10 22L19 14L27 20V27H1Z" fill="#fff" /><Ax /></>,
  <><rect x="6" y="20" width="6" height="7" {...gw} /><rect x="6" y="3" width="6" height="16" {...gb} /><rect x="18" y="12" width="6" height="15" {...gw} /><rect x="18" y="3" width="6" height="9" {...gg} /><path d="M1 23L10 15L17 20L27 11" stroke={K} strokeWidth="1.800" /><Ax /></>,
  <><rect x="5" y="12" width="6" height="15" {...gb} /><rect x="12" y="2" width="6" height="25" {...gw} /><rect x="18" y="8" width="6" height="19" {...gg} /><path d="M1 23L11 14L19 19L27 11" stroke={K} strokeWidth="1.800" /><Ax /></>,
  <><path d="M3 5Q9 8 14 8T25 4V9Q20 12 14 12T3 11Z" {...gg} /><path d="M3 16H9L14 20L20 16H25V22H19L14 19L9 22H3Z" fill="#f6a350" stroke="#d8731a" strokeWidth="1.300" /><path d="M3 11Q8 12 10 17T18 17T25 11V16Q20 18 18 22H10Q8 17 3 16Z" {...gb} /><Ax /></>,
  <><path d="M4 27V9H9V27M20 27V3H25V27" fill="#fff" {...gk} /><rect x="10" y="9" width="5" height="8" {...gg} /><rect x="15" y="2" width="4" height="15" fill={BS} /><Ax /></>,
  <><rect x="1" y="3" width="26" height="7.500" {...gb} /><rect x="5" y="10.500" width="18" height="7" {...gb} /><rect x="9" y="17.500" width="10" height="7" {...gb} /></>,
  <><path d="M5 6H10V11H5ZM12 11H17V16H12ZM20 17H25V22H20Z" fill="#7db5e2" /><path d="M20 2H25V7H20ZM5 18H10V23H5Z" fill={K} /><Ax /></>,
  <><circle cx="14" cy="14" r="13" {...gw} /><path d="M14 1A13 13 0 0 1 22 24L14 14Z" {...gb} /></>,
  <><circle cx="14" cy="14" r="10" stroke={BS} strokeWidth="8" /><circle cx="14" cy="14" r="10" stroke={B} strokeWidth="5.500" /><path d="M1 14A13 13 0 0 1 14 1V7A7 7 0 0 0 7 14Z" fill="#fff" stroke={GS} strokeWidth="1.400" /></>,
  <><rect x="1" y="1" width="26" height="26" {...gw} /><path d="M1 1H13V27H1ZM1 14H13" {...gb} /><path d="M13 8H27M18 8V27M18 18H27M21 1V18M13 1V27" {...gk} /></>,
  <><circle cx="15" cy="12" r="9" fill="#fff" stroke={K} strokeWidth="1.500" /><path d="M9 8Q13 3 17 5L15 9L10 11ZM18 10L23 8V14L19 18ZM10 14L14 15L15 19L11 18Z" fill="#2e8b45" /><path d="M10 1Q2 6 4 15T16 25T24 22M15 24V27M6 27H25" {...gk} /></>,
  <><path d="M1 3H11V12L18 8V3H27V15L22 20L15 24L10 22L5 24L2 16Z" {...gg} /><path d="M1 3H10L13 12L6 13L1 12ZM14 15H21V11H27V16L22 21L19 24H15Z" {...gb} /></>,
  <><path d="M19 -1L2 25L17 19Z" fill="#3f9fd8" /><path d="M19 -1L26 28L16 19Z" fill="#1d7ac0" /></>,
  <><path d="M1 19A13 13 0 0 1 27 19H20A6.500 6.500 0 0 0 8 19Z" {...gb} /><path d="M1 19A13 13 0 0 1 7 8L11 13Q8 15 8 19Z" {...gw} /><path d="M12 18L21 8L16 20Z" fill={K} /></>,
  <><rect x="1" y="4" width="26" height="20" {...gw} /><text x="4" y="18" fontFamily="Open Sans" fontSize="12" fill="#1a80c8" textLength="20">123</text><path d="M4 21H24" stroke={GS} strokeWidth="1.300" /></>,
  <><rect x="1" y="1" width="26" height="26" {...gw} /><path d="M6 5V22" stroke={GS} strokeWidth="1.500" /><path d="M8 8H23M8 17H23" stroke={BS} strokeWidth="2.600" /><path d="M8 12H16M8 21H16" stroke={GS} strokeWidth="1.400" /></>,
  <><rect x="1" y="3" width="26" height="22" {...gw} /><path d="M4 14L8.500 7L13 14Z" fill="#7fc98a" stroke="#2e8b45" strokeWidth="1.300" /><path d="M15 7H24L19.500 14Z" fill="#f49090" stroke="#d13438" strokeWidth="1.300" /><path d="M4 19H24" stroke={GS} strokeWidth="1.500" /></>,
  <><path d="M17 26H1V1H27V12M1 5H27" {...gk} /><path d="M2 3H26" stroke={G} strokeWidth="2.500" /><path d="M5 10H10V14H5ZM5 19H10V23H5Z" {...gg} /><path d="M15 14H29L24 20V28H20V20Z" {...gw} /></>,
  <><rect x="1" y="1" width="26" height="26" {...gw} /><path d="M2 3.500H26" stroke={G} strokeWidth="3.500" /><path d="M1 6H27" {...gk} /><path d="M2 13H26M2 20H26M9.500 6V26M18 6V26" stroke={GS} strokeWidth="1.400" /></>,
  <><rect x="1" y="1" width="26" height="26" {...gw} /><path d="M2 3.500H26" stroke={G} strokeWidth="3.500" /><path d="M1 6H27" {...gk} /><path d="M18 6H27V27H1V20H18Z" fill={B} /><path d="M2 13H26M2 20H26M9.500 6V26M18 6V26" stroke={BS} strokeWidth="1.300" /><rect x="1" y="1" width="26" height="26" {...gk} /></>,
  <><text x="5" y="22" fontFamily="Open Sans" fontWeight="700" fontSize="24" fill="#2a7fb8" textLength="14" lengthAdjust="spacingAndGlyphs">R</text></>,
  <><text x="-1" y="21" fontFamily="Open Sans" fontWeight="700" fontSize="24" fill="#2a7fb8" textLength="28">Py</text></>,
  <><path d="M2 6H20" stroke="#1a80c8" strokeWidth="1.600" /><circle cx="22.500" cy="6" r="3.500" {...gb} /><path d="M2 13H14M2 19H8" stroke={GS} strokeWidth="1.500" /><circle cx="16" cy="13" r="2" {...gg} /><circle cx="10" cy="19" r="2" {...gg} /><Ax /></>,
  <><path d="M10 13H18M14 13V4H18M14 13V22H18" {...gk} /><rect x="1" y="10" width="9" height="6" {...gb} /><rect x="18" y="1" width="9" height="6" {...gb} /><rect x="18" y="10" width="9" height="6" {...gb} /><rect x="18" y="19" width="9" height="6" {...gb} /></>,
  <><path d="M1 3H27V20H13L6 26V20H1Z" fill="#fff" stroke={BS} strokeWidth="1.600" /></>,
  <><path d="M4 8V1H17L24 8V27H4V14M17 1V8H24" {...gw} /><circle cx="5" cy="11" r="3" {...gb} /><path d="M9 14H18M9 18H15M13 18H19" stroke="#1a80c8" strokeWidth="1.300" /></>,
  <><path d="M7 4H2Q1 13 8 14M21 4H26Q27 13 20 14" {...gk} /><path d="M7 2H21V11Q21 17 14 18Q7 17 7 11Z" {...gw} /><path d="M7 1H21V4H7ZM8 23H20V27H8Z" {...gb} /><path d="M11 23Q14 22 14 18Q14 22 17 23" {...gk} /></>,
  <><path d="M3 1H17L24 8V29H3ZM17 1V8H24" {...gw} /><path d="M7 18H10V26H7ZM12 22H15V26H12ZM18 14H21V26H18Z" fill={K} /></>,
  <><path d="M13 5H27V25H4V18" {...gw} /><text x="7" y="19" fontFamily="Open Sans" fontSize="12" fill="#1a80c8" textLength="17">123</text><path d="M7 22H24" stroke={GS} strokeWidth="1.300" /><g transform="scale(.72)"><Bolt /></g></>,
  <><path d="M16 2H26V12H16ZM2 16H12V26H2ZM12 2V12H6" stroke={GS} strokeWidth="1.500" fill="#fff" /><path d="M8 12L12 5V12Z" fill={BS} /><path d="M15 16H29L24 22V29H20V22Z" {...gw} /><g transform="scale(.72)"><Bolt /></g></>,
  <><path d="M10 2H26V8H20V14L14 18L10 26H2V18L3 13" {...gb} /><path d="M26 2V12M2 26H16" stroke={BS} strokeWidth="2" /><path d="M0 0H8V8L4 16L0 8Z" fill="#d8690c" /><circle cx="4" cy="4.500" r="1.600" fill="#fff" /><circle cx="24" cy="24" r="3.800" fill="#d8690c" /><circle cx="27" cy="17" r="2" fill="#d8690c" /></>,
  <><path d="M11 1L1 14L11 27L14 23L18 27L27 14L18 1L14 6ZM14 6L8 14L14 23M22 8L13 20M13 8L22 20" stroke="#8b2f97" strokeWidth="1.500" /></>,
  <><path d="M1 3H19L27 14L19 25H1L9 14ZM1 3L9 14M19 3L9 14M23 9L6 20M27 14L10 25" stroke="#1a7fd0" strokeWidth="1.500" /></>,
];

function Visualizations() {
  const row = "flex items-center justify-between pl-[12px] pr-[23px]";
  return (
    <div className="flex w-[271px] shrink-0 flex-col border-x border-[#dddbd9] bg-[#f3f2f0] text-[#323130]">
      <div className="flex h-[60px] items-center pl-[12px] pr-[11px] text-[#252423]">
        <T w={148} c="text-[22.500px] font-semibold">Visualizations</T>
        <div className="ml-auto"><DoubleChev /></div>
      </div>
      <div className="-mt-[3px] flex h-[23px] items-center pl-[12px] text-[16.500px] font-semibold text-[#323130]"><T w={92}>Build visual</T></div>
      <div className="mt-[6px] flex pl-[12px]">
        <div className="flex h-12 w-12 rounded-[3px] bg-[#d0cfce] pt-[6px] pl-[6px]">
          <Svg w={37} h={37}><path d="M0 1H29" stroke={K} strokeWidth="1.600" /><path d="M1 8H36V19H1ZM1 25H36V36H1Z" fill="#117865" stroke="#2b2a29" strokeWidth="1.600" strokeDasharray="3.500 2" /></Svg>
        </div>
        <Svg w={36} h={36} c="mt-[6px] ml-[57px]"><path d="M6 35H1V1H17L27 11V15M17 1V12H27" stroke="#252423" strokeWidth="1.700" /><path d="M35 14L24 30L20 26ZM20 26Q15 26 14 31Q12 34 9 34Q16 37 21 34Q24 32 24 30Z" stroke="#252423" strokeWidth="1.700" fill="#f3f2f0" /></Svg>
      </div>
      <Svg w={269} h={14} c="mt-[6px]"><path d="M0 13H24L36 1L48 13H269" stroke="#8a8886" strokeWidth="1.400" /></Svg>
      <div className="mt-[16px] grid w-[254px] grid-cols-[repeat(6,28px)] gap-[14px] pl-[16px]">
        {visuals.map((v, i) => <Svg key={i} w={28} h={28}>{v}</Svg>)}
      </div>
      <Svg w={22} h={4} c="mt-[23px] ml-[19px]"><circle cx="2" cy="2" r="1.600" fill={K} /><circle cx="11" cy="2" r="1.600" fill={K} /><circle cx="20" cy="2" r="1.600" fill={K} /></Svg>
      <div className="mt-auto flex h-[239px] border-t border-[#dddbd9] text-[17px]">
        <div className="w-[261px] overflow-hidden pl-[6px]">
          <div className="mt-[13px] flex h-[24px] items-center pl-[12px]"><T w={51}>Values</T></div>
          <div className="mt-[8px] flex h-[43px] items-center rounded-[2px] border border-dashed border-[#bdbbb9] bg-white pb-[3px] pl-[15px]"><T w={160}>Add data fields here</T></div>
          <div className="mt-[15px] flex h-[24px] items-center pl-[12px] font-semibold text-[#484644]"><T w={105}>Drill through</T></div>
          <div className={`${row} mt-[13px] h-[24px]`}>
            <T w={99}>Cross-report</T>
            <span className="flex h-6 w-12 items-center rounded-full border border-[#7a7876] bg-white pl-[6px] text-[13px] text-[#605e5c]"><span className="mr-[3px] h-3 w-3 rounded-full bg-[#605e5c]" /><T w={20}>Off</T></span>
          </div>
          <div className={`${row} mt-[16px] h-[24px]`}>
            <T w={111}>Keep all filters</T>
            <span className="flex h-6 w-12 items-center rounded-full bg-[#117865] pl-[7px] text-[13px] text-white"><T w={19}>On</T><span className="ml-[3px] h-3 w-3 rounded-full bg-white" /></span>
          </div>
          <div className="mt-[15px] h-[7px] border border-b-0 border-dashed border-[#bdbbb9] bg-white" />
        </div>
        <div className="mt-[3px] h-[190px] w-[9px] rounded-full bg-[#8a8886]" />
      </div>
    </div>
  );
}

function DataPane() {
  return (
    <div className="flex-1 bg-[#f3f2f0] text-[#323130]">
      <div className="flex h-[60px] items-center pl-[12px] pr-[12px] text-[#252423]">
        <T w={51} c="text-[22.500px] font-semibold">Data</T>
        <div className="ml-auto"><DoubleChev /></div>
      </div>
      <div className="mt-[7px] ml-[6px] flex h-[37px] w-[258px] items-center rounded-[5px] border border-[#d2d0ce] border-b-[#605e5c] bg-white pt-[2px] pl-[19px] text-[18px] text-[#707070]">
        <svg width="22" height="22" viewBox="0 0 22 22" fill="none" stroke={K} strokeWidth="1.400"><circle cx="9" cy="9" r="7.500" /><path d="M14.500 14.500L20.500 20.500" /></svg>
        <T w={62} c="ml-[9px]">Search</T>
      </div>
      <div className="mt-[19px] flex h-[26px] items-center pl-[26px]">
        <Svg w={8} h={15}><path d="M1 1L7 7.500L1 14" stroke={K} strokeWidth="1.500" /></Svg>
        <Svg w={18} h={18} c="ml-[10px]"><rect x="1" y="1" width="16" height="16" rx="2.500" stroke={K} strokeWidth="1.700" /><path d="M1 6.500H17M1 11.800H17M6.500 1V17M11.800 1V17" stroke={K} strokeWidth="1.500" /></Svg>
        <T w={146} c="ml-[9px] text-[17px]">sales_data_sample</T>
      </div>
    </div>
  );
}

function StatusBar() {
  return (
    <div className="flex h-[35px] items-center border-t border-[#dddbd9] bg-[#f3f2f0] pt-[2px] pl-[6px] text-[17px] text-[#484644]">
      <T w={88} c="mt-px">Page 1 of 1</T>
      <Svg w={183} h={20} c="-mt-0.5 ml-auto">
        <path d="M0 10.500H6M172 10H183M177.500 4.500V15.500" stroke="#484644" strokeWidth="2.200" />
        <path d="M13 10H163" stroke="#605e5c" strokeWidth="1.200" />
        <rect x="46" y="1.500" width="6" height="17" fill="#605e5c" /><rect x="87" y="6.500" width="2" height="7" fill="#605e5c" />
      </Svg>
      <T w={34} c="-mt-0.5 ml-[21px]">53%</T>
      <Svg w={24} h={19} c="mr-[27px] ml-[28px]"><rect x="1" y="1" width="22" height="17" stroke="#605e5c" strokeWidth="1.600" /><path d="M4 8V4H8M16 4H20V8M20 11V15H16M8 15H4V11" stroke="#605e5c" strokeWidth="1.600" /></Svg>
    </div>
  );
}

/* ---------- taskbar ---------- */
const Chrome = ({ badge }: { badge?: boolean }) => (
  <svg width="37" height="37" viewBox="0 0 36 36" className="block shrink-0 overflow-visible">
    <circle cx="18" cy="18" r="18" fill="#fbc116" />
    <path d="M2.400 9A18 18 0 0 1 33.600 9H18A9 9 0 0 0 10.200 22.500Z" fill="#e33b2e" />
    <path d="M2.400 9A18 18 0 0 0 18 36L25.800 22.500A9 9 0 0 1 10.200 22.500Z" fill="#2ba24c" />
    <circle cx="18" cy="18" r="8.800" fill="#fff" /><circle cx="18" cy="18" r="7" fill="#3a7af0" />
    {badge ? <><circle cx="26" cy="27" r="11" fill="#45525c" /><text x="26" y="31.500" textAnchor="middle" fontFamily="Open Sans" fontWeight="600" fontSize="12" fill="#e8ecef">M</text></> : null}
  </svg>
);

function Taskbar() {
  return (
    <footer className="flex h-[61px] items-center border-t border-black bg-[linear-gradient(90deg,#1c150b_0%,#221c10_25%,#1b160c_45%,#2a2410_60%,#0d0808_64%,#0c0808_100%)] text-white">
      <Svg w={25} h={25} c="ml-[23px]"><path d="M0 3.500L11 2V12H0ZM12.500 1.800L25 0V12H12.500ZM0 13.200H11V23L0 21.500ZM12.500 13.200H25V25L12.500 23.200Z" fill="#fff" /></Svg>
      <div className="ml-[24px] flex h-full w-[432px] items-center border-[3px] border-[#b4b4b4] bg-white pl-[15px] text-[20px] text-[#323130]">
        <Mag s="#1b1a19" /><T w={198} c="mt-[4px] ml-[18px]">Type here to search</T>
      </div>
      <Svg w={25} h={24} c="ml-[24px]"><path d="M1 0V4H16V0M1 8H16V17H1ZM1 24V20H16V24M22 0V24" stroke="#fff" strokeWidth="1.400" /><path d="M20.500 7H24.500V11H20.500Z" fill="#fff" /></Svg>
      <CopilotMark id="tb" w={35} h={32} c="ml-[46px]" />
      <Svg w={38} h={37} c="ml-[39px]">
        <defs><linearGradient id="edge" x1="0" y1="0" x2="1" y2=".3"><stop offset="0" stopColor="#2aa7e0" /><stop offset=".6" stopColor="#38c9b4" /><stop offset="1" stopColor="#63d94e" /></linearGradient></defs>
        <path d="M1 17Q3 0 19 0Q36 1 37 16Q37 25 27 26Q20 26 22 22Q25 19 22 15Q17 9 8 12Q3 14 1 17Z" fill="url(#edge)" />
        <path d="M1 17Q4 9 14 10Q21 11 23 17Q13 17 16 26Q21 34 34 31Q28 38 17 37Q1 34 1 17Z" fill="#1576c8" />
        <circle cx="10" cy="28" r="9.500" fill="#c9c7c5" /><circle cx="10" cy="24.500" r="3.500" fill="#7c7a78" /><path d="M4 34Q4 29 10 29T16 34Q10 38 4 34Z" fill="#7c7a78" />
      </Svg>
      <Svg w={38} h={32} c="ml-[37px]">
        <path d="M10 7L23 0L37 9V29Q37 32 34 32H13Q10 32 10 29Z" fill="#1066b8" /><path d="M11 20L36 6V29Q36 32 33 32H13Q10 32 10 29Z" fill="#3bc2f4" /><path d="M10 32L37 13V29Q37 32 34 32Z" fill="#5fdcff" /><path d="M14 8L26 1L32 5L14 17Z" fill="#55b6ee" />
        <rect y="8" width="19" height="18" rx="2" fill="#1371cc" /><ellipse cx="9.500" cy="17" rx="4.300" ry="4.800" stroke="#fff" strokeWidth="2" />
      </Svg>
      <div className="ml-[37px]"><Chrome /></div>
      <Svg w={36} h={36} c="ml-[38px]">
        <path d="M9 5V1H27V5" stroke="#3a9fd8" strokeWidth="2.400" /><path d="M0 4H36V31Q36 36 31 36H5Q0 36 0 31Z" fill="#f4f4f4" />
        <path d="M10 12H17V19H10Z" fill="#f25022" /><path d="M19 12H26V19H19Z" fill="#7fba00" /><path d="M10 21H17V28H10Z" fill="#00a4ef" /><path d="M19 21H26V28H19Z" fill="#ffb900" />
      </Svg>
      <div className="ml-[27px] flex h-full w-[61px] items-center justify-center border-b-[3px] border-[#76b0de] pt-[3px]">
        <Svg w={33} h={27}><path d="M0 2Q0 0 2 0H12L15 3H31Q33 3 33 5V10H0Z" fill="#e8a512" /><path d="M0 6H33V24Q33 26 31 26H2Q0 26 0 24Z" fill="#ffd968" /><path d="M6 27V17Q6 14 9 14H24Q27 14 27 17V27H21V21H12V27Z" fill="#3a96dd" /></Svg>
      </div>
      <div className="ml-[14px] flex h-full w-[62px] items-center justify-center border-b-[3px] border-[#76b0de] pt-[2px]"><Chrome badge /></div>
      <div className="ml-[8px] flex h-full w-[73px] items-center justify-center border-b-[3px] border-[#76b0de] bg-[#4c4844] pt-[2px]">
        <Svg w={29} h={37}><rect x="15" width="13" height="37" rx="1.500" fill="#d99a0c" /><rect x="8" y="9" width="13" height="28" rx="1.500" fill="#f0bb2c" /><rect y="19" width="13" height="18" rx="1.500" fill="#fad668" /></Svg>
      </div>
      <Svg w={34} h={37} c="ml-[106px]">
        <path d="M0 20Q6 24 12 14L16 28L6 30Q0 27 0 20Z" fill="#f59a3c" />
        <path d="M8 31Q2 31 3 25Q4 21 9 21Q11 14 19 15Q26 16 27 22Q33 22 32 28Q31 31 27 31Z" fill="#c3d8f6" /><path d="M23 26Q27 32 26 34Q24 39 20 35Q19 32 23 26Z" fill="#2a86f0" />
        <circle cx="24" cy="9" r="9" fill="#cf3226" /><text x="24" y="14" textAnchor="middle" fontFamily="Open Sans" fontSize="14" fill="#fff">1</text>
      </Svg>
      <T w={44} c="mt-[2px] ml-[11px] text-[19px]">34°C</T>
      <T w={87} c="mt-[2px] ml-[12px] text-[19px]">Light rain</T>
      <Svg w={18} h={10} c="-mt-1 ml-[37px]"><path d="M1 9L9 1L17 9" stroke="#fff" strokeWidth="1.500" /></Svg>
      <Svg w={26} h={16} c="ml-[14px]"><path d="M6 9Q6 0 14 0Q20 1 20 7L10 13Z" fill="#aaa8a8" /><path d="M5 16Q0 15 0 11T6 6Q11 4 14 9Q19 5 23 8Q26 10 25 13T21 16Z" fill="#f4f4f4" /></Svg>
      <Svg w={23} h={14} c="ml-[12px]"><rect x=".7" y=".7" width="19.600" height="12.600" stroke="#fff" strokeWidth="1.400" /><rect x="3" y="3" width="12" height="8" fill="#fff" /><path d="M22 4.500V9.500" stroke="#fff" strokeWidth="1.600" /></Svg>
      <Svg w={20} h={18} c="ml-[16px]"><path d="M1 17Q1 2 18 1M5 18Q5 6 18 5M9 18Q10 10 18 9M13 18Q14 14 18 13" stroke="#c8c6c6" strokeWidth="1.300" /><circle cx="17" cy="16.500" r="1.500" fill="#fff" /></Svg>
      <Svg w={22} h={18} c="ml-[13px]"><path d="M1 6H5L10 1V17L5 12H1ZM13 6Q15 9 13 12M16 3.500Q19.500 9 16 14.500" stroke="#fff" strokeWidth="1.400" /><path d="M19 1Q23.500 9 19 17" stroke="#8a8888" strokeWidth="1.400" /></Svg>
      <div className="mt-[2px] ml-[18px] flex w-[34px] flex-col items-center text-[15.500px] leading-[27px]"><T w={34}>ENG</T><T w={17}>IN</T></div>
      <div className="mt-[2px] ml-[19px] flex w-[86px] flex-col items-center text-[15.500px] leading-[27px]"><T w={65}>7:15 PM</T><T w={84}>4/18/2025</T></div>
      <Svg w={25} h={25} c="ml-[26px]"><path d="M1 1H24V20H15L12 24L9 20H1Z" stroke="#fff" strokeWidth="1.500" /></Svg>
      <span className="ml-[30px] h-full w-px bg-[#77706e]" />
    </footer>
  );
}

export default function App() {
  return (
    <div className="flex h-[1080px] w-[1920px] flex-col overflow-hidden bg-[#f3f2f0] font-['Open_Sans','Noto_Sans',sans-serif]">
      <TitleBar />
      <div className="bg-[#fafafa]"><Tabs /></div>
      <Ribbon />
      <main className="flex h-[744px]">
        <Rail />
        <div className="flex w-[1317px] shrink-0 flex-col">
          <div className="flex h-[691px]">
            <div className="w-[1016px] shrink-0 bg-white">
              <div className="h-[60px] bg-[linear-gradient(180deg,#e4e4e4_0,#fff_5px,#fff_46px,#e9e9e9_100%)]" />
              <Report />
              <div className="h-[60px] bg-[linear-gradient(180deg,#ececec_0,#fff_14px)]" />
            </div>
            <Filters />
          </div>
          <PageBar />
        </div>
        <Visualizations />
        <DataPane />
      </main>
      <StatusBar />
      <Taskbar />
    </div>
  );
}
